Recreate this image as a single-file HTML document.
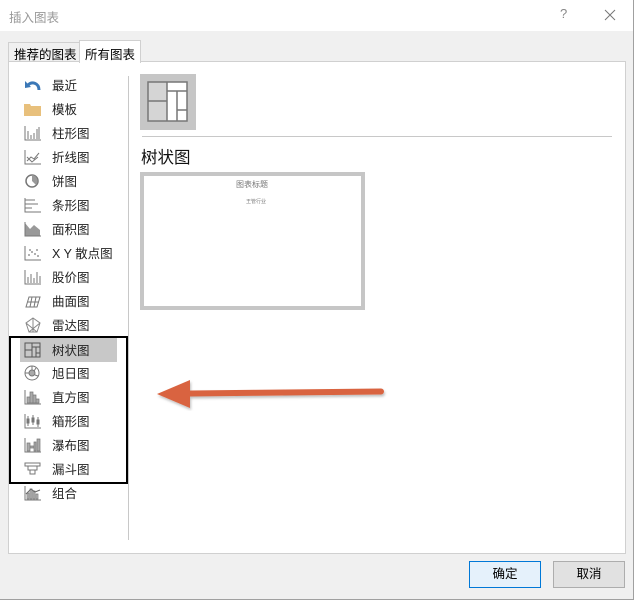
<!DOCTYPE html>
<html><head><meta charset="utf-8">
<style>
*{margin:0;padding:0;box-sizing:border-box}
body{width:634px;height:600px;background:#f0f0f0;position:relative;overflow:hidden;font-family:"Liberation Sans","Noto Sans CJK SC","Microsoft YaHei",sans-serif;font-size:12px;color:#000}
.abs{position:absolute}
#title{left:0;top:0;width:634px;height:31px;background:#fff}
#title .t{left:9px;top:7px;color:#999;font-size:12.5px}
#win{left:0;top:0;width:634px;height:600px;border-right:1px solid #a0a0a0;border-bottom:1px solid #a0a0a0;pointer-events:none}
.tab{top:40px;height:22px;font-size:12.5px;padding:2px 5px;border:1px solid #d0d0d0;border-bottom:none}
#panel{left:8px;top:61px;width:618px;height:493px;background:#fff;border:1px solid #d0d0d0}
.item{left:20px;width:98px;height:24px}
.item svg{position:absolute;left:4px;top:4px}
.item span{position:absolute;left:32px;top:2px;font-size:12.5px;color:#222}
.btn{top:561px;width:72px;height:27px;text-align:center;line-height:25px;font-size:12.5px}
</style></head><body>
<div id="title" class="abs"><div class="t abs">插入图表</div>
<div class="abs" style="left:560px;top:6px;color:#888;font-size:13px">?</div>
<svg class="abs" style="left:604px;top:9px" width="12" height="12"><path d="M1 1L11 11M11 1L1 11" stroke="#777" stroke-width="1"/></svg>
</div>
<div class="tab abs" style="left:8px;top:42px;height:20px;padding-top:1px;background:#f0f0f0">推荐的图表</div>
<div class="tab abs" style="left:79px;background:#fff;height:23px;padding-top:3px;z-index:2">所有图表</div>
<div id="panel" class="abs"></div>
<div class="abs" style="left:128px;top:76px;width:1px;height:464px;background:#c8c8c8"></div>

<div class="item abs" style="top:73px"><svg width="18" height="16"><path d="M15 13C15 6 8 4 4 8" stroke="#3b78b7" stroke-width="3" fill="none"/><path d="M1 4L7 10L1 11Z" fill="#3b78b7"/></svg><span>最近</span></div>
<div class="item abs" style="top:97px"><svg width="18" height="16"><path d="M0 3h6l1 2h10v10H0z" fill="#e8c07c"/></svg><span>模板</span></div>
<div class="item abs" style="top:121px"><svg width="18" height="16" fill="none" stroke="#777"><path d="M1 1v14h16M4 14V6M7 14V10M10 14V8M13 14V4M15 14V2"/></svg><span>柱形图</span></div>
<div class="item abs" style="top:145px"><svg width="18" height="16" fill="none" stroke="#777"><path d="M1 1v14h16M3 12l4-4 3 2 5-6M3 8l5 5 6-5"/></svg><span>折线图</span></div>
<div class="item abs" style="top:169px"><svg width="18" height="16"><circle cx="8" cy="8" r="6" fill="#fff" stroke="#777" stroke-width="1.5"/><path d="M8 8V2A6 6 0 0 1 12 12Z" fill="#999"/></svg><span>饼图</span></div>
<div class="item abs" style="top:193px"><svg width="18" height="16" fill="none" stroke="#777"><path d="M1 1v14h16M1 3h10M1 7h13M1 11h7"/></svg><span>条形图</span></div>
<div class="item abs" style="top:217px"><svg width="18" height="16"><path d="M1 2l5 6 4-4 6 5v6H1z" fill="#999"/><path d="M1 1v14h16" stroke="#777" fill="none"/></svg><span>面积图</span></div>
<div class="item abs" style="top:241px"><svg width="18" height="16" fill="#999"><path d="M1 1v14h16" stroke="#777" fill="none"/><circle cx="5" cy="10" r="1"/><circle cx="8" cy="7" r="1"/><circle cx="11" cy="9" r="1"/><circle cx="13" cy="5" r="1"/><circle cx="6" cy="5" r="1"/><circle cx="14" cy="11" r="1"/></svg><span>X Y 散点图</span></div>
<div class="item abs" style="top:265px"><svg width="18" height="16" fill="none" stroke="#777"><path d="M1 1v14h16M4 14V8M7 14V5M10 14V9M13 14V3M16 14V7"/></svg><span>股价图</span></div>
<div class="item abs" style="top:289px"><svg width="18" height="16" fill="none" stroke="#777"><path d="M2 14l3-10h11l-3 10zM4 9h11M8 4l-2 10M12 4l-2 10"/></svg><span>曲面图</span></div>
<div class="item abs" style="top:313px"><svg width="18" height="16" fill="none" stroke="#888"><path d="M9 1l7 5-3 9H5L2 6zM9 1v14M2 6l11 9M16 6L5 15"/></svg><span>雷达图</span></div>
<div class="abs" style="left:20px;top:338px;width:97px;height:24px;background:#c8c8c8"></div>
<div class="item abs" style="top:338px"><svg width="18" height="16" fill="none" stroke="#555"><rect x="1" y="1" width="15" height="14"/><path d="M8 1v14M1 8h7M8 5h8M12 5v10M12 11h4"/></svg><span>树状图</span></div>
<div class="item abs" style="top:361px"><svg width="18" height="16" fill="none" stroke="#777"><circle cx="8" cy="8" r="7"/><circle cx="8" cy="8" r="3" fill="#aaa"/><path d="M8 1v4M1 8h4M12 3l-2 3M14 11l-3-1"/></svg><span>旭日图</span></div>
<div class="item abs" style="top:385px"><svg width="18" height="16"><path d="M1 1v14h16" stroke="#777" fill="none"/><path d="M3 8h3v6H3zM6 3h3v11H6zM9 6h3v8H9zM12 10h3v4h-3z" fill="#aaa" stroke="#777" stroke-width=".7"/></svg><span>直方图</span></div>
<div class="item abs" style="top:409px"><svg width="18" height="16" fill="none" stroke="#777"><path d="M1 1v14h16M4 3v10M3 6h2v4H3zM9 2v10M8 5h2v4H8zM14 4v10M13 7h2v4h-2z"/></svg><span>箱形图</span></div>
<div class="item abs" style="top:433px"><svg width="18" height="16"><path d="M1 1v14h16" stroke="#777" fill="none"/><path d="M3 6h3v8H3zM6 9h4v2H6zM10 5h2v9h-2zM13 2h3v12h-3z" fill="#aaa" stroke="#777" stroke-width=".7"/></svg><span>瀑布图</span></div>
<div class="item abs" style="top:457px"><svg width="18" height="16" fill="none" stroke="#777"><path d="M1 2h15v3H1zM4 5h9v4H4zM6 9h5v4H6z"/></svg><span>漏斗图</span></div>
<div class="item abs" style="top:481px"><svg width="18" height="16"><path d="M1 1v14h16" stroke="#777" fill="none"/><path d="M3 8h2v6H3zM6 4h2v10H6zM9 6h2v8H9zM12 9h2v5h-2z" fill="#bbb" stroke="#777" stroke-width=".7"/><path d="M2 9l5-5 4 3 5-2" stroke="#666" fill="none"/></svg><span>组合</span></div>
<div class="abs" style="left:9px;top:336px;width:119px;height:148px;border:2px solid #000"></div>

<div class="abs" style="left:140px;top:74px;width:56px;height:56px;background:#c6c6c6"></div>
<svg class="abs" style="left:147px;top:81px" width="42" height="42"><rect x="1" y="1" width="19" height="39" fill="#d5d5d5"/><rect x="20" y="1" width="20" height="39" fill="#fff"/><g fill="none" stroke="#777" stroke-width="1.5"><rect x="1" y="1" width="39" height="39"/><path d="M20 1v39M1 20h19M20 10h20M30 10v30M30 29h10"/></g></svg>
<div class="abs" style="left:142px;top:136px;width:470px;height:1px;background:#c8c8c8"></div>
<div class="abs" style="left:141px;top:144px;font-size:16.5px;color:#111">树状图</div>
<div class="abs" style="left:140px;top:172px;width:225px;height:138px;border:4px solid #c6c6c6;background:#fff"></div>
<div class="abs" style="left:236px;top:179px;font-size:8px;color:#777">图表标题</div>
<div class="abs" style="left:246px;top:198px;font-size:5px;color:#777">王管行业</div>

<svg class="abs" style="left:150px;top:372px" width="240" height="44"><defs><filter id="s"><feDropShadow dx="1" dy="2" stdDeviation="1.2" flood-color="#000" flood-opacity=".25"/></filter></defs><g filter="url(#s)" fill="#d9633f"><path d="M40 18.5L231 16.5a3 3 0 0 1 0 6L40 24.5z"/><path d="M7 22L40 8V36z"/></g></svg>

<div class="btn abs" style="left:469px;border:1px solid #0078d7;background:#e5f1fb">确定</div>
<div class="btn abs" style="left:553px;border:1px solid #adadad;background:#e1e1e1">取消</div>
<div id="win" class="abs"></div>
</body></html>
